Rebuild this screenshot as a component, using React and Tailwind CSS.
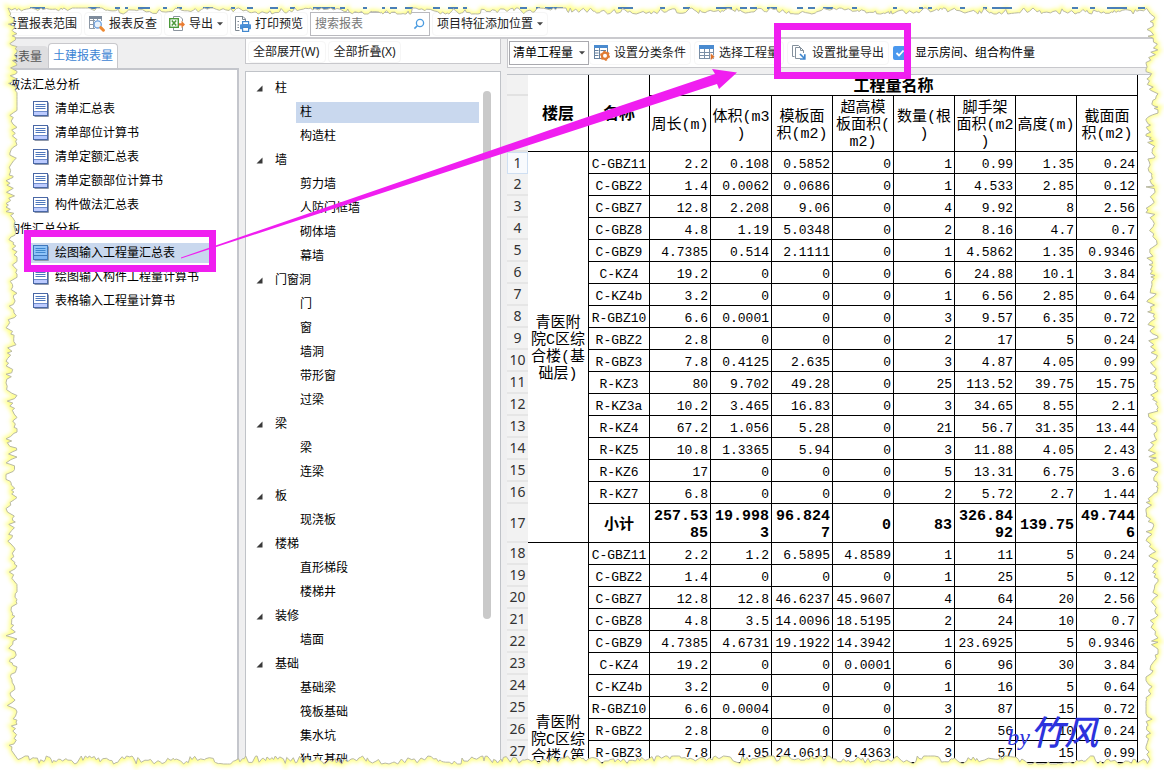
import React from "react";

const WIDTH = 1164;
const HEIGHT = 770;

/* ---------- data ---------- */

const REPORTS = [
  {
    title: "做法汇总分析",
    items: ["清单汇总表", "清单部位计算书", "清单定额汇总表", "清单定额部位计算书", "构件做法汇总表"],
  },
  {
    title: "构件汇总分析",
    items: ["绘图输入工程量汇总表", "绘图输入构件工程量计算书", "表格输入工程量计算书"],
  },
];

const COMPONENTS = [
  { title: "柱", items: ["柱", "构造柱"] },
  { title: "墙", items: ["剪力墙", "人防门框墙", "砌体墙", "幕墙"] },
  { title: "门窗洞", items: ["门", "窗", "墙洞", "带形窗", "过梁"] },
  { title: "梁", items: ["梁", "连梁"] },
  { title: "板", items: ["现浇板"] },
  { title: "楼梯", items: ["直形梯段", "楼梯井"] },
  { title: "装修", items: ["墙面"] },
  { title: "基础", items: ["基础梁", "筏板基础", "集水坑", "独立基础"] },
];

const COLUMNS = [
  ["周长(m)"],
  ["体积(m3", ")"],
  ["模板面", "积(m2)"],
  ["超高模", "板面积(", "m2)"],
  ["数量(根", ")"],
  ["脚手架", "面积(m2", ")"],
  ["高度(m)"],
  ["截面面", "积(m2)"],
];

const FLOOR_ONE = [
  ["C-GBZ11", "2.2", "0.108", "0.5852", "0", "1", "0.99", "1.35", "0.24"],
  ["C-GBZ2", "1.4", "0.0062", "0.0686", "0", "1", "4.533", "2.85", "0.12"],
  ["C-GBZ7", "12.8", "2.208", "9.06", "0", "4", "9.92", "8", "2.56"],
  ["C-GBZ8", "4.8", "1.19", "5.0348", "0", "2", "8.16", "4.7", "0.7"],
  ["C-GBZ9", "4.7385", "0.514", "2.1111", "0", "1", "4.5862", "1.35", "0.9346"],
  ["C-KZ4", "19.2", "0", "0", "0", "6", "24.88", "10.1", "3.84"],
  ["C-KZ4b", "3.2", "0", "0", "0", "1", "6.56", "2.85", "0.64"],
  ["R-GBZ10", "6.6", "0.0001", "0", "0", "3", "9.57", "6.35", "0.72"],
  ["R-GBZ2", "2.8", "0", "0", "0", "2", "17", "5", "0.24"],
  ["R-GBZ3", "7.8", "0.4125", "2.635", "0", "3", "4.87", "4.05", "0.99"],
  ["R-KZ3", "80", "9.702", "49.28", "0", "25", "113.52", "39.75", "15.75"],
  ["R-KZ3a", "10.2", "3.465", "16.83", "0", "3", "34.65", "8.55", "2.1"],
  ["R-KZ4", "67.2", "1.056", "5.28", "0", "21", "56.7", "31.35", "13.44"],
  ["R-KZ5", "10.8", "1.3365", "5.94", "0", "3", "11.88", "4.05", "2.43"],
  ["R-KZ6", "17", "0", "0", "0", "5", "13.31", "6.75", "3.6"],
  ["R-KZ7", "6.8", "0", "0", "0", "2", "5.72", "2.7", "1.44"],
];

const SUBTOTAL = [
  ["257.53", "85"],
  ["19.998", "3"],
  ["96.824", "7"],
  ["0"],
  ["83"],
  ["326.84", "92"],
  ["139.75"],
  ["49.744", "6"],
];

const FLOOR_TWO = [
  ["C-GBZ11", "2.2", "1.2", "6.5895", "4.8589", "1", "11", "5", "0.24"],
  ["C-GBZ2", "1.4", "0", "0", "0", "1", "25", "5", "0.12"],
  ["C-GBZ7", "12.8", "12.8", "46.6237", "45.9607", "4", "64", "20", "2.56"],
  ["C-GBZ8", "4.8", "3.5", "14.0096", "18.5195", "2", "24", "10", "0.7"],
  ["C-GBZ9", "4.7385", "4.6731", "19.1922", "14.3942", "1", "23.6925", "5", "0.9346"],
  ["C-KZ4", "19.2", "0", "0", "0.0001", "6", "96", "30", "3.84"],
  ["C-KZ4b", "3.2", "0", "0", "0", "1", "16", "5", "0.64"],
  ["R-GBZ10", "6.6", "0.0004", "0", "0", "3", "87", "15", "0.72"],
  ["R-GBZ2", "2.8", "0", "0", "0", "2", "56", "10", "0.24"],
  ["R-GBZ3", "7.8", "4.95", "24.0611", "9.4363", "3", "57", "15", "0.99"],
];

/* ---------- icons ---------- */

function Caret() {
  return (
    <svg className="h-1 w-1.5 shrink-0" viewBox="0 0 6 4" aria-hidden="true">
      <path d="M0 0.3H6L3 3.6Z" fill="#444" />
    </svg>
  );
}

function ReportIcon({ active }) {
  return (
    <svg className="size-4 shrink-0" viewBox="0 0 16 16" aria-hidden="true">
      <path d="M1.5 15.5H15.5V1.5" fill="none" stroke="#8f98aa" />
      <rect x="0.5" y="0.5" width="14" height="14" fill={active ? "#8fc4f8" : "#fff"} stroke={active ? "#3f78bd" : "#4a68a6"} />
      <rect x="1" y="10" width="13" height="4" fill={active ? "#7fb6f4" : "#bccbff"} />
      <path d="M2.5 3.5H12.5M2.5 5.5H12.5M2.5 7.5H12.5" stroke={active ? "#3f87cf" : "#4f78bd"} />
      <path d="M1 10.5H14" stroke={active ? "#3f78bd" : "#6f8ccc"} />
    </svg>
  );
}

function TraceIcon() {
  return (
    <svg className="size-4 shrink-0" viewBox="0 0 16 16" aria-hidden="true">
      <path d="M0.5 0.5H12.5V5M0.5 0.5V12.5H6M0.5 4.5H6M0.5 8.5H5M4.5 3V12.5M8.5 3V4.5" fill="none" stroke="#8d98a6" />
      <rect x="0" y="0" width="13" height="3" fill="#7e8b9b" />
      <circle cx="8.7" cy="8.4" r="3.6" fill="#e8f2fd" stroke="#6ea0dc" strokeWidth="1.3" />
      <path d="M11.8 11.6L14.4 14.2" stroke="#ee8a33" strokeWidth="3" strokeLinecap="round" />
    </svg>
  );
}

function ExportIcon() {
  return (
    <svg className="size-4 shrink-0" viewBox="0 0 16 16" aria-hidden="true">
      <path d="M4.5 3V0.5H11L13.5 3V5.5M13.5 11V14.5H4.5V12" fill="#fff" stroke="#8b949e" />
      <rect x="0.7" y="2.7" width="8.6" height="8.6" fill="#fff" stroke="#4d9a3a" strokeWidth="1.4" />
      <path d="M2.8 4.5L7.2 9.5M7.2 4.5L2.8 9.5" stroke="#4d9a3a" strokeWidth="1.5" />
      <path d="M10 7.2H12.5V4.8L16 8.4L12.5 12V9.6H10Z" fill="#ea7b30" />
    </svg>
  );
}

function PrintIcon() {
  return (
    <svg className="size-4 shrink-0" viewBox="0 0 16 16" aria-hidden="true">
      <path d="M4.5 14.5H0.5V0.5H8L10.5 3V5" fill="none" stroke="#7d8791" />
      <path d="M7.5 0.5V3.5H10.5" fill="none" stroke="#7d8791" />
      <path d="M2.5 5.5H4M2.5 9H4M2.5 11.5H4" stroke="#7d8791" />
      <rect x="7.6" y="5.6" width="6" height="3" fill="#fff" stroke="#4187cd" strokeWidth="1.2" />
      <rect x="5" y="8.3" width="11" height="5" rx="0.8" fill="#4a90d9" />
      <rect x="7.6" y="11.4" width="6" height="4" fill="#fff" stroke="#4187cd" strokeWidth="1.2" />
    </svg>
  );
}

function ClassifyIcon() {
  return (
    <svg className="size-4 shrink-0" viewBox="0 0 16 16" aria-hidden="true">
      <rect x="0.5" y="0.5" width="13" height="13" fill="#fff" stroke="#66819e" />
      <rect x="0" y="0" width="14" height="3" fill="#4a8bd0" />
      <path d="M1 5.5H4.5M1 8H4.5M1 10.5H4.5M6.5 5.5H12" stroke="#66819e" />
      <path d="M5.5 3V13.5" stroke="#66819e" />
      <circle cx="11" cy="10.8" r="4.2" fill="#e07c34" stroke="#e07c34" strokeWidth="1.6" strokeDasharray="2.2 2.2" />
      <circle cx="11" cy="10.8" r="2" fill="#fff" />
    </svg>
  );
}

function SelectQuantityIcon() {
  return (
    <svg className="size-4 shrink-0" viewBox="0 0 16 16" aria-hidden="true">
      <rect x="0.5" y="1.5" width="14" height="12" fill="#fff" stroke="#7a8ea5" />
      <rect x="0" y="0" width="15" height="4" fill="#4a8bd0" />
      <path d="M0.5 7.5H14.5M0.5 10.5H14.5M5.5 4V13.5M10.5 4V13.5" stroke="#7a8ea5" />
      <path d="M11.5 8V15.5L15.8 11.8Z" fill="#dd7129" stroke="#fff" strokeWidth="0.5" />
    </svg>
  );
}

function BatchExportIcon() {
  return (
    <svg className="size-4 shrink-0" viewBox="0 0 16 16" aria-hidden="true">
      <path d="M2.5 11.5H0.5V0.5H6.5L8 2" fill="none" stroke="#84909c" />
      <path d="M8 13.5H3.5V2.5H8.5L11.5 5.5V8" fill="#fff" stroke="#84909c" />
      <path d="M8.5 2.5V5.5H11.5" fill="none" stroke="#84909c" />
      <path d="M8 9L12 13M12.8 9.2V14H8" fill="none" stroke="#4187cd" strokeWidth="1.7" />
    </svg>
  );
}

/* ---------- building blocks ---------- */

function ToolButton({ icon, children, caret }) {
  return (
    <button
      type="button"
      className="flex h-6 shrink-0 items-center gap-1 rounded border border-[#f6f6f6] px-1 whitespace-nowrap"
    >
      {icon}
      <span>{children}</span>
      {caret && <Caret />}
    </button>
  );
}

function TopToolbar() {
  return (
    <header className="flex h-[39px] shrink-0 items-center gap-0.5 border-b-2 border-[#cacace] bg-white pt-2.5 text-[#222]">
      <ToolButton>设置报表范围</ToolButton>
      <ToolButton icon={<TraceIcon />}>报表反查</ToolButton>
      <ToolButton icon={<ExportIcon />} caret>
        导出
      </ToolButton>
      <ToolButton icon={<PrintIcon />}>打印预览</ToolButton>
      <label className="flex h-6 w-[120px] shrink-0 items-center border border-[#b9b9be] px-1">
        <input
          type="text"
          aria-label="搜索报表"
          placeholder="搜索报表"
          className="min-w-0 flex-1 outline-none placeholder:text-[#777]"
        />
        <svg className="size-3 shrink-0" viewBox="0 0 12 12" aria-hidden="true">
          <circle cx="7" cy="5" r="3.6" fill="none" stroke="#4a9be0" strokeWidth="1.3" />
          <path d="M4.3 7.7L1.4 10.6" stroke="#4a9be0" strokeWidth="1.6" />
        </svg>
      </label>
      <ToolButton caret>项目特征添加位置</ToolButton>
    </header>
  );
}

function ReportPanel() {
  return (
    <aside className="flex w-[239px] shrink-0 flex-col pt-1">
      <div role="tablist" className="flex items-end">
        <button type="button" role="tab" aria-selected="false" className="h-[22px] rounded-t bg-[#dedee0] px-1.5 text-[#555]">
          报表量
        </button>
        <button
          type="button"
          role="tab"
          aria-selected="true"
          className="h-[25px] rounded-t border border-b-0 border-[#c8c8cc] bg-white px-1 text-[#3c84d4]"
        >
          土建报表量
        </button>
      </div>
      <nav className="flex-1 border-t-2 border-r-2 border-[#c4c6cc] bg-white pt-[3px]">
        {REPORTS.map((group, g) => (
          <section key={group.title}>
            <h2 className="h-6 pl-2 leading-6">{group.title}</h2>
            <ul>
              {group.items.map((item, i) => {
                const active = g === 1 && i === 0;
                return (
                  <li key={item} className="flex h-6 items-center pr-7 pl-[31px]">
                    <button
                      type="button"
                      className={
                        active
                          ? "flex h-5 flex-1 items-center gap-1.5 bg-[#c9d8ee] pl-0.5"
                          : "flex h-5 flex-1 items-center gap-1.5 pl-0.5 whitespace-nowrap"
                      }
                    >
                      <ReportIcon active={active} />
                      {item}
                    </button>
                  </li>
                );
              })}
            </ul>
          </section>
        ))}
      </nav>
    </aside>
  );
}

function ComponentPanel() {
  return (
    <section className="flex w-64 shrink-0 flex-col gap-[7px]">
      <div className="flex h-[25px] shrink-0 items-center gap-0.5 border border-t-0 border-[#c8c8cc] bg-white px-0.5 pt-0.5 text-[#222]">
        <button type="button" className="h-[22px] rounded border border-[#f6f6f6] pr-1.5 pl-1">
          全部展开(W)
        </button>
        <button type="button" className="h-[22px] rounded border border-[#f6f6f6] px-1">
          全部折叠(X)
        </button>
      </div>
      <div className="flex flex-1 border border-b-0 border-[#c0c3c8] bg-white pt-1">
        <div className="flex-1 pl-2.5">
          {COMPONENTS.map((group, g) => (
            <section key={group.title}>
              <h3 className="flex h-6 items-center gap-3">
                <svg className="size-[7px]" viewBox="0 0 7 7" aria-hidden="true">
                  <path d="M6.5 0.5V6.5H0.5Z" fill="#3a3a3a" />
                </svg>
                {group.title}
              </h3>
              <ul className="pl-10">
                {group.items.map((item, i) => (
                  <li key={item} className="flex h-6 items-center">
                    <button
                      type="button"
                      className={
                        g === 0 && i === 0
                          ? "h-[21px] flex-1 bg-[#c9d8ee] pl-1 text-left"
                          : "h-[21px] flex-1 pl-1 text-left"
                      }
                    >
                      {item}
                    </button>
                  </li>
                ))}
              </ul>
            </section>
          ))}
        </div>
        <div className="w-[21px] px-1 pt-[15px]">
          <div className="h-[528px] w-2 rounded-full bg-[#c9c9c9]" />
        </div>
      </div>
    </section>
  );
}

function RowNumber({ children, first }) {
  return (
    <th
      scope="row"
      className={
        first
          ? "border border-[#cfdff2] bg-[#f8fafd] p-0 font-['Noto_Sans',sans-serif] text-sm leading-4 font-normal text-[#333]"
          : "border-b-2 border-[#e6e6e6] bg-[#f2f2f2] p-0 font-['Noto_Sans',sans-serif] text-sm leading-4 font-normal text-[#333]"
      }
    >
      {children}
    </th>
  );
}

function DataRow({ number, cells, floor }) {
  return (
    <tr className="h-[22px]">
      <RowNumber first={number === 1}>{number}</RowNumber>
      {floor}
      {cells.map((value, i) => (
        <td
          key={i}
          className={
            i === 0
              ? "border-r border-b border-black p-0 pt-1 text-center"
              : "border-r border-b border-black p-0 pt-1 pr-0.5 text-right"
          }
        >
          {value}
        </td>
      ))}
    </tr>
  );
}

function FloorCell({ rowSpan, lines }) {
  return (
    <td rowSpan={rowSpan} className="border-r border-b border-black p-0 pt-1 text-center text-[15px] leading-[17px]">
      {lines.map((line) => (
        <div key={line}>{line}</div>
      ))}
    </td>
  );
}

function QuantityTable() {
  return (
    <table className="w-[631px] table-fixed border-separate border-spacing-0 font-['Liberation_Mono','Noto_Sans_CJK_SC',monospace] text-[13px] leading-4 text-black">
      <colgroup>
        <col className="w-[21px]" />
        {Array.from({ length: 10 }, (_, i) => (
          <col key={i} className="w-[61px]" />
        ))}
      </colgroup>
      <thead>
        <tr className="h-[21px]">
          <td className="border-b-2 border-[#e2e2e2] bg-[#f2f2f2] p-0" />
          <th scope="col" rowSpan={2} className="border-r border-b border-black p-0 pt-1 text-base leading-4">
            楼层
          </th>
          <th scope="col" rowSpan={2} className="border-r border-b border-black p-0 pt-1 text-base leading-4">
            名称
          </th>
          <th scope="colgroup" colSpan={8} className="border-r border-b border-black p-0 pt-1 text-base leading-4">
            工程量名称
          </th>
        </tr>
        <tr className="h-14">
          <td className="border-b-2 border-[#e2e2e2] bg-[#f2f2f2] p-0" />
          {COLUMNS.map((lines) => (
            <th key={lines[0]} scope="col" className="border-r border-b border-black p-0 pt-1 text-[15px] leading-[17px] font-normal">
              {lines.map((line) => (
                <div key={line}>{line}</div>
              ))}
            </th>
          ))}
        </tr>
      </thead>
      <tbody>
        {FLOOR_ONE.map((cells, i) => (
          <DataRow
            key={i}
            number={i + 1}
            cells={cells}
            floor={i === 0 && <FloorCell rowSpan={17} lines={["青医附", "院C区综", "合楼(基", "础层)"]} />}
          />
        ))}
        <tr className="h-[39px] text-[15px] leading-[17px] font-bold">
          <RowNumber>17</RowNumber>
          <td className="border-r border-b border-black p-0 pt-1 text-center">小计</td>
          {SUBTOTAL.map((lines, i) => (
            <td key={i} className="border-r border-b border-black p-0 pt-1 pr-0.5 text-right">
              {lines.map((line) => (
                <div key={line}>{line}</div>
              ))}
            </td>
          ))}
        </tr>
        {FLOOR_TWO.map((cells, i) => (
          <DataRow
            key={i}
            number={i + 18}
            cells={cells}
            floor={i === 0 && <FloorCell rowSpan={11} lines={["青医附", "院C区综", "合楼(第", "\u00a0"]} />}
          />
        ))}
        <tr className="h-[189px]">
          <td className="bg-[#f2f2f2]" />
          {Array.from({ length: 9 }, (_, i) => (
            <td key={i} className="border-r border-black" />
          ))}
        </tr>
      </tbody>
    </table>
  );
}

function QuantityPanel() {
  return (
    <main className="flex min-w-0 flex-1 flex-col gap-1.5">
      <div className="flex h-[29px] shrink-0 items-center border-b border-l border-[#c8c8cc] bg-white pl-px text-[#222]">
        <label className="relative flex shrink-0 items-center">
          <select
            aria-label="工程量类型"
            className="h-6 w-20 appearance-none border border-[#a9a9ae] bg-white pl-[3px] text-black"
            defaultValue="清单工程量"
          >
            <option>清单工程量</option>
          </select>
          <span className="pointer-events-none absolute right-1 flex">
            <Caret />
          </span>
        </label>
        <ToolButton icon={<ClassifyIcon />}>设置分类条件</ToolButton>
        <span className="w-[3px] shrink-0" />
        <ToolButton icon={<SelectQuantityIcon />}>选择工程量</ToolButton>
        <span className="w-[3px] shrink-0" />
        <ToolButton icon={<BatchExportIcon />}>设置批量导出</ToolButton>
        <label className="ml-1 flex items-center gap-2 whitespace-nowrap text-black">
          <span className="relative flex">
            <input type="checkbox" defaultChecked className="size-3.5 appearance-none rounded-xs bg-[#4a98ee]" />
            <svg className="pointer-events-none absolute inset-0 size-3.5" viewBox="0 0 14 14" aria-hidden="true">
              <path d="M3.5 7L6 9.5L10.5 4.5" fill="none" stroke="#fff" strokeWidth="1.8" />
            </svg>
          </span>
          显示房间、组合构件量
        </label>
      </div>
      <div className="flex-1 border-t border-[#c0c3c8] bg-white">
        <QuantityTable />
      </div>
    </main>
  );
}

/* ---------- torn frame and annotations ---------- */

function randomSource(seed) {
  let s = seed;
  return () => {
    s = (s * 16807) % 2147483647;
    return s / 2147483647;
  };
}

/* Walks along one side and yields [position, depth] pairs of a ragged edge. */
function raggedSide(rand, from, to, low, high) {
  const points = [];
  const range = high - low;
  const middle = (low + high) / 2;
  let drift = middle;
  let p = from;
  while (p < to) {
    drift += (rand() - 0.5) * range * 0.5 + (middle - drift) * 0.15;
    const spike = (rand() - 0.5) * range * 0.8;
    points.push([p, Math.min(high, Math.max(low, drift + spike))]);
    p += 1 + rand() * 3;
  }
  return points;
}

function tornOutline() {
  const rand = randomSource(20177);
  const top = raggedSide(rand, 8, 1148, 8, 14);
  const right = raggedSide(rand, 14, 756, 1146, 1158);
  const bottom = raggedSide(rand, 18, 1150, 756, 764).reverse();
  const left = raggedSide(rand, 14, 752, 6, 17).reverse();
  const points = [
    ...top,
    ...right.map(([p, d]) => [d, p]),
    ...bottom,
    ...left.map(([p, d]) => [d, p]),
  ];
  return "M" + points.map(([x, y]) => x.toFixed(1) + " " + y.toFixed(1)).join("L") + "Z";
}

const OUTLINE = tornOutline();
const OUTSIDE = `M-20 -20H${WIDTH + 20}V${HEIGHT + 20}H-20Z${OUTLINE}`;

const TITLE_FRAGMENTS = [
  [30, 15], [88, 12], [115, 5], [125, 3], [138, 12], [163, 4], [177, 5], [203, 10], [231, 4], [247, 6],
  [270, 8], [290, 5], [313, 22], [340, 5], [363, 4], [382, 3], [390, 7], [405, 8], [433, 7], [448, 10],
  [463, 4], [520, 7], [536, 4], [545, 18], [618, 15], [660, 5], [683, 7], [716, 16], [740, 7], [750, 7],
  [767, 10], [797, 6], [808, 7], [823, 10], [852, 5], [893, 4], [919, 4], [928, 4], [960, 5], [983, 4],
  [992, 20], [1072, 6], [1090, 5], [1107, 20], [1138, 7],
];

function TornFrame() {
  return (
    <svg
      className="pointer-events-none absolute inset-0 h-full w-full"
      viewBox={`0 0 ${WIDTH} ${HEIGHT}`}
      preserveAspectRatio="none"
      aria-hidden="true"
    >
      <defs>
        <clipPath id="outside">
          <path d={OUTSIDE} clipRule="evenodd" />
        </clipPath>
        <filter id="glow" x="-5%" y="-5%" width="110%" height="110%">
          <feGaussianBlur stdDeviation="2" />
        </filter>
      </defs>
      <g clipPath="url(#outside)">
        <rect width={WIDTH} height={HEIGHT} fill="#fff" />
        <path d={OUTLINE} fill="none" stroke="#ffff78" strokeWidth="4" filter="url(#glow)" />
        {TITLE_FRAGMENTS.map(([x, w]) => (
          <rect key={x} x={x} y="7" width={w} height="2" fill="#4a7fb8" />
        ))}
      </g>
      <path d={OUTLINE} fill="none" stroke="#b9b9a4" strokeWidth="1" />
    </svg>
  );
}

function Annotations() {
  return (
    <svg
      className="pointer-events-none absolute inset-0 h-full w-full"
      viewBox={`0 0 ${WIDTH} ${HEIGHT}`}
      preserveAspectRatio="none"
      aria-hidden="true"
    >
      <g fill="none" stroke="#f01ef0" strokeWidth="7">
        <rect x="27.5" y="233.5" width="185" height="35" />
        <rect x="777.5" y="26.5" width="130" height="49" />
      </g>
      <path d="M181 257.5L580 119.5L715 74L712 69L737 72.5L719 89L717 84L580 128.5L181 258.5Z" fill="#f01ef0" />
    </svg>
  );
}

export default function App() {
  return (
    <div
      lang="zh-CN"
      className="relative flex h-screen flex-col overflow-hidden bg-[#efeff0] font-['Noto_Sans','Noto_Sans_CJK_SC',sans-serif] text-xs text-black"
    >
      <TopToolbar />
      <div className="flex min-h-0 flex-1 gap-1.5">
        <ReportPanel />
        <ComponentPanel />
        <QuantityPanel />
      </div>
      <p className="pointer-events-none absolute right-[66px] bottom-4 flex items-baseline font-['Liberation_Serif','Noto_Sans_CJK_SC',serif] text-[34px] leading-10 font-medium text-[#2c33dd] italic">
        <span className="text-2xl">by</span>竹风
      </p>
      <Annotations />
      <TornFrame />
    </div>
  );
}
